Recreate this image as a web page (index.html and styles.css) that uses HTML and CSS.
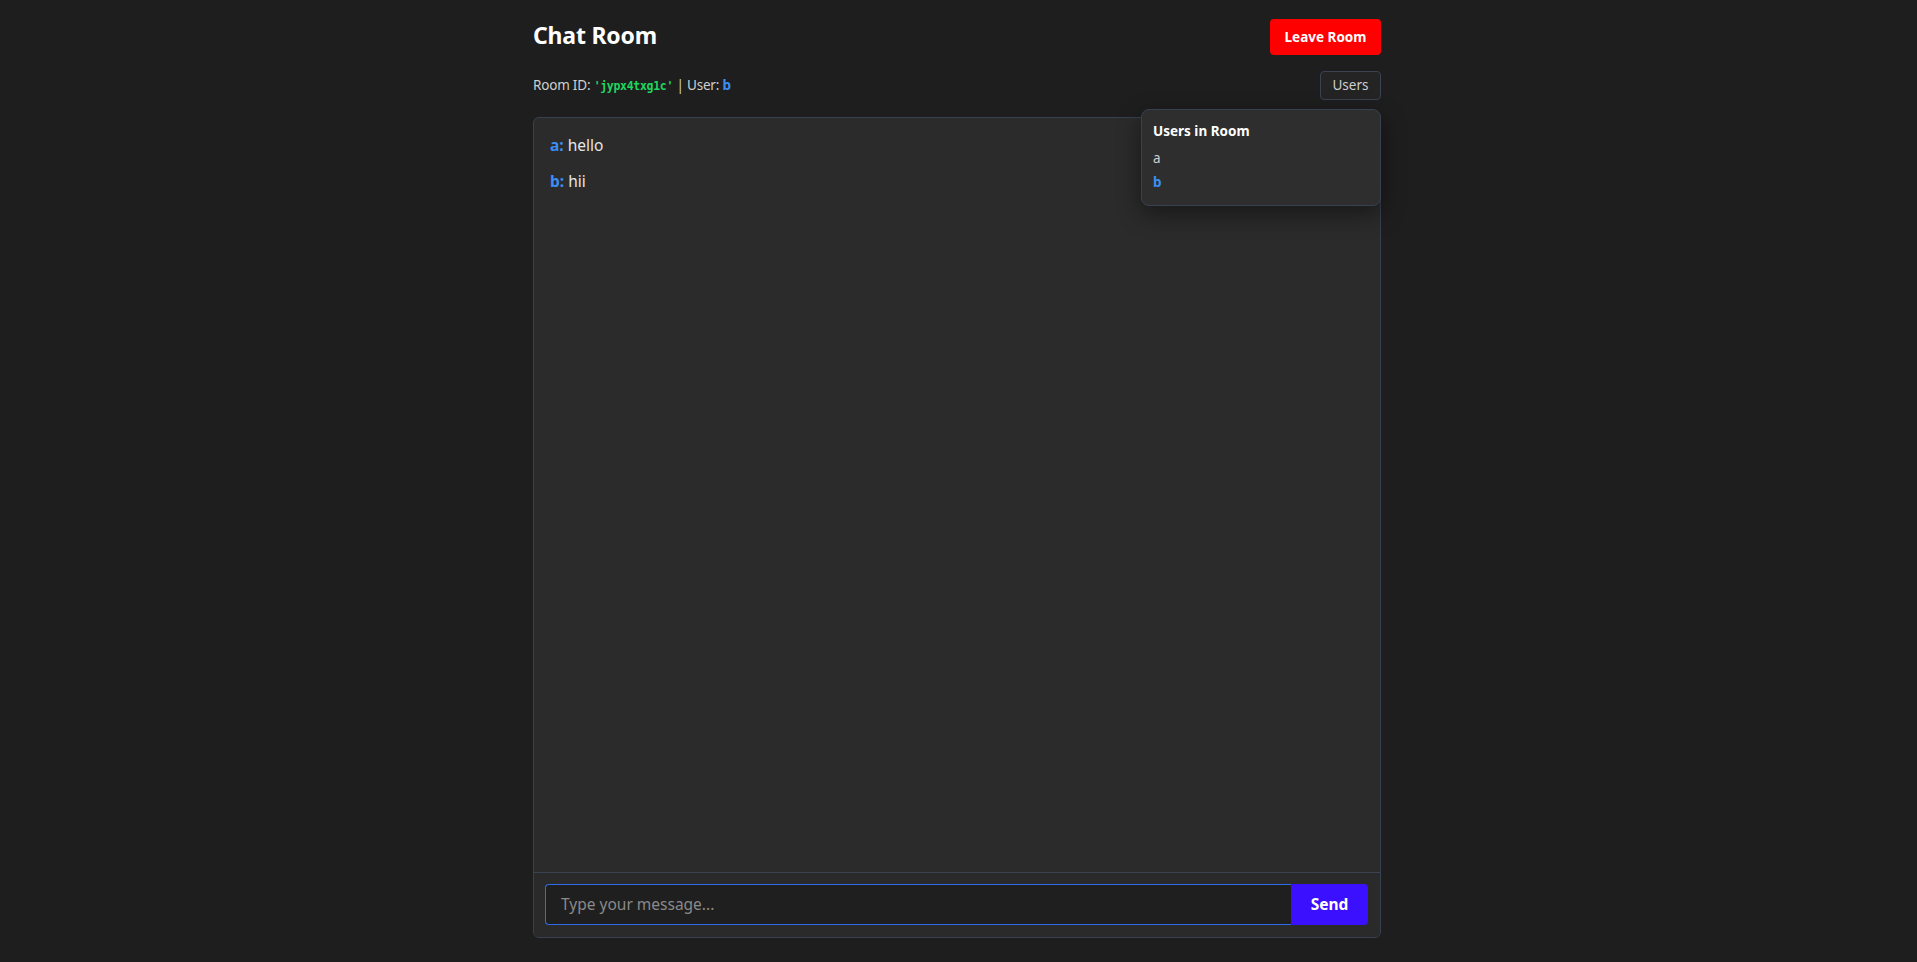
FILE: index.html
```html
<!DOCTYPE html>
<html lang="en">
<head>
<meta charset="utf-8">
<title>Chat Room</title>
<link rel="stylesheet" href="styles.css">
</head>
<body>
<div class="page">
  <header class="header">
    <h1 class="title">Chat Room</h1>
    <button class="leave-btn">Leave Room</button>
  </header>
  <div class="info-row">
    <div class="info">Room ID: <span class="room-id">'jypx4txg1c'</span> | User: <span class="me">b</span></div>
    <button class="users-btn">Users</button>
    <div class="users-popup">
      <div class="popup-title">Users in Room</div>
      <div class="popup-user">a</div>
      <div class="popup-user self">b</div>
    </div>
  </div>
  <main class="chat">
    <div class="messages">
      <div class="msg"><span class="author">a:</span> hello</div>
      <div class="msg"><span class="author">b:</span> hii</div>
    </div>
    <form class="composer">
      <input class="msg-input" type="text" placeholder="Type your message...">
      <button class="send-btn" type="button">Send</button>
    </form>
  </main>
</div>
</body>
</html>
```
FILE: styles.css
```css
* { box-sizing: border-box; }
html, body { margin: 0; padding: 0; }
body {
  background: #1e1e1e;
  font-family: "Noto Sans", "Open Sans", sans-serif;
  color: #e0e0e0;
  padding-right: 3px;
}
.page {
  width: 848px;
  margin: 0 auto;
  padding-top: 19px;
}
.header {
  display: flex;
  justify-content: space-between;
  align-items: center;
  height: 36px;
}
.title {
  margin: 0;
  padding-bottom: 3px;
  font-size: 23px;
  font-weight: 700;
  color: #ffffff;
  line-height: 33px;
  letter-spacing: -0.2px;
}
.leave-btn {
  width: 111px;
  height: 36px;
  border: none;
  border-radius: 4px;
  background: #ff0000;
  color: #ffffff;
  font-family: inherit;
  font-size: 13.5px;
  font-weight: 700;
  padding: 0 0 1px;
  cursor: pointer;
}
.info-row {
  position: relative;
  display: flex;
  justify-content: space-between;
  align-items: center;
  height: 29px;
  margin-top: 16px;
  margin-bottom: 17px;
}
.info {
  font-size: 13.5px;
  color: #cfcfcf;
  letter-spacing: -0.2px;
  padding-bottom: 2px;
}
.room-id {
  font-family: "DejaVu Sans Mono", monospace;
  font-size: 11.5px;
  font-weight: 700;
  letter-spacing: -0.3px;
  color: #1ed760;
}
.me {
  color: #3b8ef5;
  font-weight: 700;
}
.users-btn {
  width: 61px;
  height: 29px;
  border: 1px solid #3a4352;
  border-radius: 4px;
  background: #242424;
  color: #cfcfcf;
  font-family: inherit;
  font-size: 13.5px;
  padding: 0 0 2px;
}
.users-popup {
  position: absolute;
  right: 0;
  top: 38px;
  width: 240px;
  padding: 11px 11px 13px;
  background: #2e2e2e;
  border: 1px solid #374151;
  border-radius: 8px;
  box-shadow: 0 8px 24px rgba(0, 0, 0, 0.45);
  z-index: 5;
}
.popup-title {
  font-size: 13.5px;
  font-weight: 700;
  line-height: 20px;
  color: #ffffff;
  margin-bottom: 7px;
}
.popup-user {
  font-size: 13.5px;
  line-height: 20px;
  color: #cfcfcf;
}
.popup-user + .popup-user { margin-top: 4px; }
.popup-user.self {
  color: #3b8ef5;
  font-weight: 700;
}
.chat {
  height: 821px;
  display: flex;
  flex-direction: column;
  background: #2b2b2b;
  border: 1px solid #374151;
  border-radius: 6px;
  overflow: hidden;
}
.messages {
  flex: 1;
  padding: 15px 16px;
}
.msg {
  font-size: 15.5px;
  line-height: 24px;
  color: #e6e6e6;
}
.msg + .msg { margin-top: 12px; }
.author {
  color: #3b8ef5;
  font-weight: 700;
}
.composer {
  display: flex;
  margin: 0;
  padding: 11px 12px 12px 11px;
  border-top: 1px solid #3a4352;
  background: #2a2a2a;
}
.msg-input {
  flex: 1;
  height: 41px;
  padding: 0 15px 2px;
  background: #1f1f1f;
  border: 1px solid #2f6ae8;
  border-right: none;
  border-radius: 4px 0 0 4px;
  color: #e0e0e0;
  font-family: inherit;
  font-size: 15.5px;
  outline: none;
}
.msg-input::placeholder { color: #8a8a8a; }
.send-btn {
  width: 77px;
  height: 41px;
  border: none;
  border-radius: 0 4px 4px 0;
  background: #3b10ff;
  color: #ffffff;
  font-family: inherit;
  font-size: 15.5px;
  font-weight: 700;
  padding: 0 0 2px;
}
```
